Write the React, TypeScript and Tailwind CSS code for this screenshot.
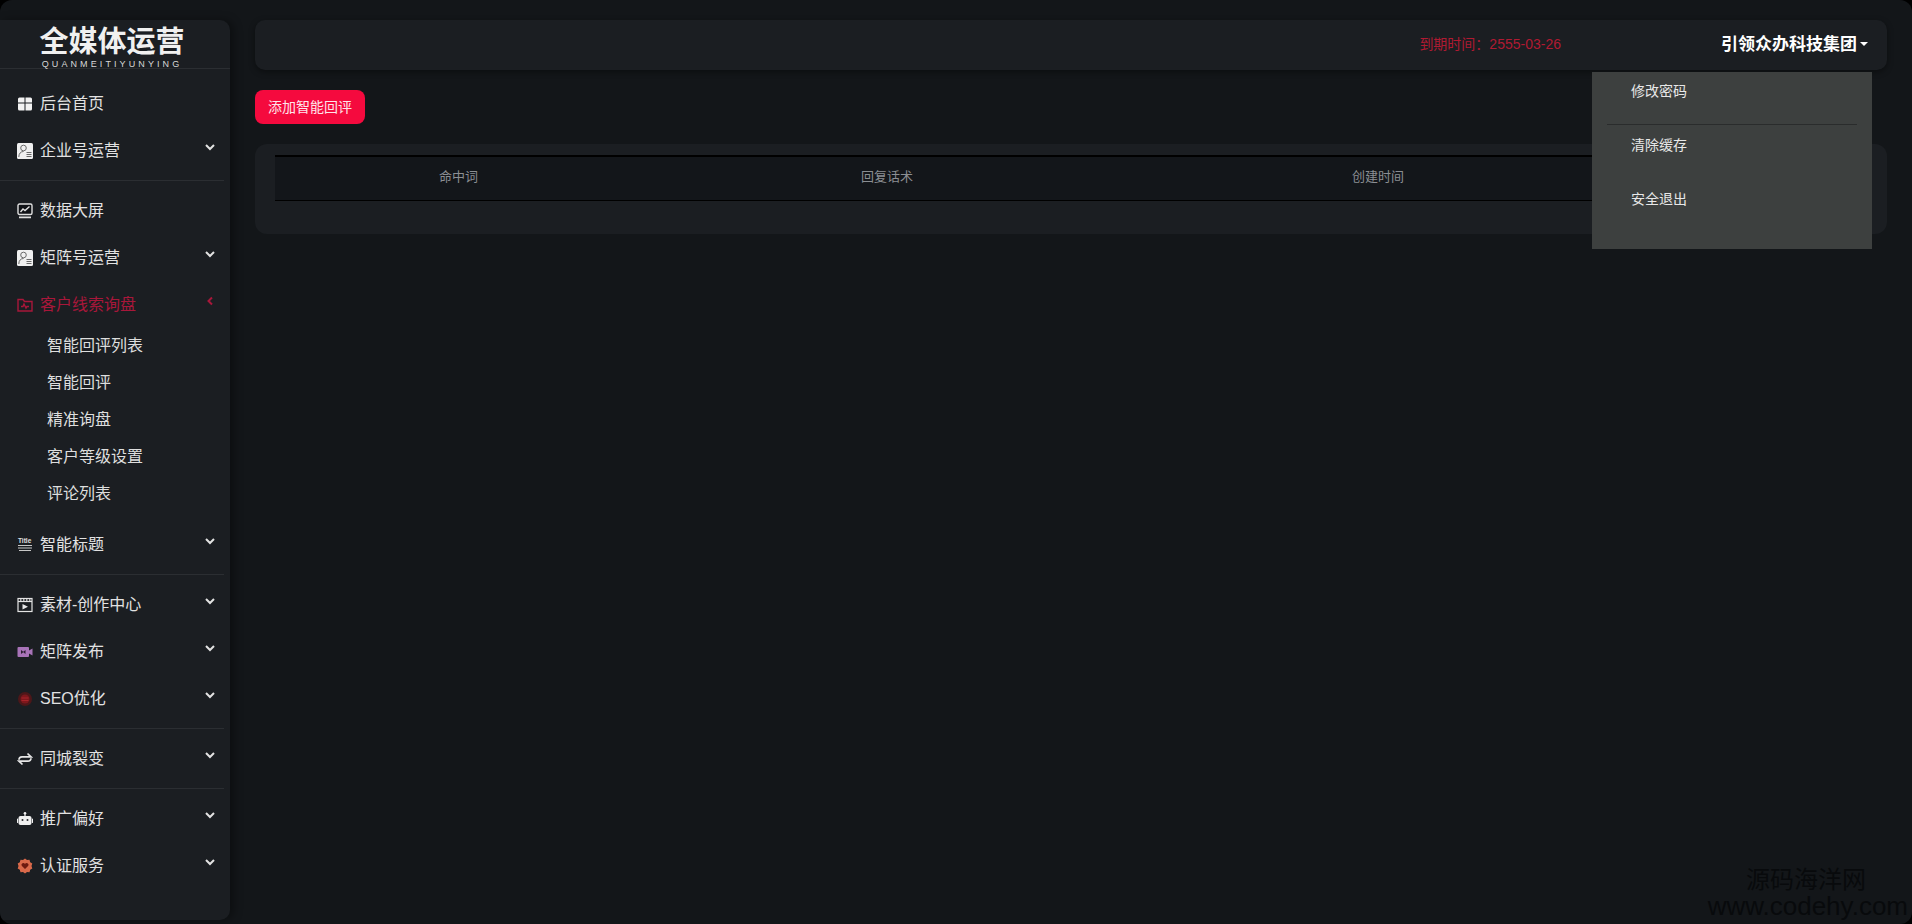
import type { ReactNode } from "react";

const Chevron = ({ open }: { open?: boolean }) => (
  <svg viewBox="0 0 12 12" className="absolute right-[14px] top-[14px] w-[12px] h-[12px]" fill="none" stroke="currentColor" strokeWidth="2">
    {open ? <path d="M8 2.500 4.500 6 8 9.500" /> : <path d="M2 4 6 8 10 4" />}
  </svg>
);

const Grid = () => (
  <svg viewBox="0 0 16 16" className="w-[16px] h-[16px]" fill="#f2f2f2">
    <path d="M2.500 1.500h5v5H1v-3.500a1.500 1.500 0 0 1 1.500-1.500ZM8.500 1.500h5a1.500 1.500 0 0 1 1.500 1.500v3.500H8.500ZM1 7.500h6.500v7h-5A1.500 1.500 0 0 1 1 13ZM8.500 7.500H15V13a1.500 1.500 0 0 1-1.500 1.500h-5Z" />
  </svg>
);

const Profile = () => (
  <svg viewBox="0 0 16 16" className="w-[16px] h-[16px]">
    <rect x="0" y="0" width="16" height="16" rx="1.500" fill="#f0f0f0" />
    <circle cx="6.500" cy="5" r="2.800" fill="none" stroke="#6a6a6a" strokeWidth="1" />
    <path d="M1.800 14c0-3.500 2-5.500 4.700-5.500M9.500 9.500h5M9.500 11.500h5M9.500 13.500h5" fill="none" stroke="#6a6a6a" strokeWidth="1" />
  </svg>
);

const Monitor = () => (
  <svg viewBox="0 0 16 16" className="w-[16px] h-[16px]" fill="none" stroke="#e0e0e0" strokeWidth="1.400">
    <rect x="1" y="1" width="14" height="10.500" rx="1.500" fill="#101216" />
    <path d="M3.500 9 6 6l2 1.500L12.500 3.500" />
    <path d="M2 14.300h12" strokeWidth="1.800" />
  </svg>
);

const FolderPulse = () => (
  <svg viewBox="0 0 16 16" className="w-[16px] h-[16px]" fill="none" stroke="#a8173a" strokeWidth="1.400">
    <path d="M1 2.500h5L7.500 4.500H15V14H1Z" />
    <path d="M4 9.500h2L7 7l2 4 1-1.500h2" />
  </svg>
);

const TitleIcon = () => (
  <svg viewBox="0 0 16 16" className="w-[16px] h-[16px]" fill="none" stroke="#c8c8c8" strokeWidth="1.100">
    <text x="1" y="6" fontSize="6.500" fontWeight="700" fill="#e0e0e0" stroke="none" fontFamily="Liberation Sans">Title</text>
    <path d="M1 8.500h14M1 11h14M2 13.500h12" />
  </svg>
);

const Clapper = () => (
  <svg viewBox="0 0 16 16" className="w-[16px] h-[16px]" fill="none" stroke="#e4e4e4" strokeWidth="1.200">
    <rect x="1" y="1.500" width="14" height="13" />
    <path d="M1 4.500h14" />
    <path d="M3 3h1.500M6 3h1.500M9 3h1.500M12 3h1.500" strokeWidth="1.600" />
    <path d="M5.500 7v5.500l5.500-2.750Z" fill="#e8e8e8" stroke="none" />
  </svg>
);

const VideoIcon = () => (
  <svg viewBox="0 0 16 16" className="w-[16px] h-[16px]">
    <rect x="0.500" y="3" width="11.500" height="10" rx="1" fill="#a873b8" />
    <path d="M12 6.500 15.500 4.500v7L12 9.500Z" fill="#a873b8" />
    <path d="M4 6v4l2.500-2ZM8.500 6v4L6 8Z" fill="#2a1e30" />
  </svg>
);

const Seo = () => (
  <svg viewBox="0 0 16 16" className="w-[16px] h-[16px]">
    <circle cx="8" cy="8" r="7" fill="#4d1719" />
    <circle cx="8" cy="8" r="4.500" fill="#7e171c" />
    <path d="M4.500 7h7M4.500 9.500h7" stroke="#a8242a" strokeWidth="1" />
  </svg>
);

const Exchange = () => (
  <svg viewBox="0 0 16 16" className="w-[16px] h-[16px]" fill="none" stroke="#e6e6e6" strokeWidth="1.700">
    <path d="M10.500 2.500 14 5.800H5a3 3 0 0 0-3 3" />
    <path d="M5.500 13.500 2 10.200h9a3 3 0 0 0 3-3" />
  </svg>
);

const Robot = () => (
  <svg viewBox="0 0 16 16" className="w-[16px] h-[16px]" fill="#f0f0f0">
    <circle cx="8" cy="2.300" r="1.300" />
    <rect x="7.400" y="3" width="1.200" height="2.500" />
    <rect x="1.500" y="5" width="13" height="9" rx="2" />
    <rect x="0" y="7.500" width="1" height="4.500" rx=".5" />
    <rect x="15" y="7.500" width="1" height="4.500" rx=".5" />
    <circle cx="5.500" cy="9" r="1" fill="#2a2c30" />
    <circle cx="10.500" cy="9" r="1" fill="#2a2c30" />
  </svg>
);

const Badge = () => (
  <svg viewBox="0 0 16 16" className="w-[16px] h-[16px]">
    <path d="M8 .5 10 2l2.500-.2.700 2.400 2.100 1.400-.8 2.400.8 2.400-2.100 1.400-.7 2.400L10 14 8 15.500 6 14l-2.500.2-.7-2.400L.7 10.400l.8-2.400-.8-2.400 2.100-1.400.7-2.400L6 2Z" fill="#d9694a" />
    <path d="M8 11 4.700 7.700a1.800 1.800 0 0 1 3.300-1.700 1.800 1.800 0 0 1 3.300 1.700Z" fill="#6d1a10" />
  </svg>
);

const Row = ({ icon, label, arrow = true, active }: { icon: ReactNode; label: string; arrow?: boolean; active?: boolean }) => (
  <div className={`relative flex items-center h-[47px] pl-[17px] gap-[7px] text-[16px] ${active ? "text-[#a8173a]" : "text-[#e2e2e2]"}`}>
    <span className="flex w-[16px] justify-center">{icon}</span>
    <span>{label}</span>
    {arrow && <Chevron open={active} />}
  </div>
);

const Divider = () => <div className="h-px w-[224px] my-[6px] bg-[#2b2e32]" />;

const subItems = ["智能回评列表", "智能回评", "精准询盘", "客户等级设置", "评论列表"];

export default function App() {
  return (
    <div className="h-screen bg-black overflow-hidden">
      <div
        className="relative h-full rounded-[12px] overflow-hidden bg-[#131619] flex gap-[25px] py-[20px] pr-[25px]"
        style={{ fontFamily: '"Liberation Sans", "Noto Sans CJK SC", sans-serif' }}
      >
        {/* Sidebar */}
        <aside className="w-[230px] h-[900px] shrink-0 rounded-r-[10px] bg-[#1b1e22] shadow-[4px_0_8px_rgba(0,0,0,0.35)]">
          <div className="h-[49px] border-b border-[#2b2e32] flex flex-col items-center pr-[6px]">
            <div className="text-[29px] font-bold leading-[30px] mt-[7px] text-[#f0f0f0]">全媒体运营</div>
            <div className="text-[9px] leading-[10px] mt-[2px] tracking-[3.1px] text-[#d8d8d8]">QUANMEITIYUNYING</div>
          </div>
          <div className="pt-[11px]">
            <Row icon={<Grid />} label="后台首页" arrow={false} />
            <Row icon={<Profile />} label="企业号运营" />
            <Divider />
            <Row icon={<Monitor />} label="数据大屏" arrow={false} />
            <Row icon={<Profile />} label="矩阵号运营" />
            <Row icon={<FolderPulse />} label="客户线索询盘" active />
            <div className="pb-[8px]">
              {subItems.map((s) => (
                <div key={s} className="h-[37px] flex items-center pl-[47px] text-[16px] text-[#dedede]">
                  <span className="-mt-[1px]">{s}</span>
                </div>
              ))}
            </div>
            <Row icon={<TitleIcon />} label="智能标题" />
            <Divider />
            <Row icon={<Clapper />} label="素材-创作中心" />
            <Row icon={<VideoIcon />} label="矩阵发布" />
            <Row icon={<Seo />} label="SEO优化" />
            <Divider />
            <Row icon={<Exchange />} label="同城裂变" />
            <Divider />
            <Row icon={<Robot />} label="推广偏好" />
            <Row icon={<Badge />} label="认证服务" />
          </div>
        </aside>

        {/* Main */}
        <main className="flex-1 min-w-0 flex flex-col items-start">
          <header className="w-full h-[50px] rounded-[10px] bg-[#1b1e22] shadow-[0_2px_6px_rgba(0,0,0,0.4)] flex items-center justify-end pr-[19px]">
            <span className="text-[14px] text-[#b01a32] mr-[160px] -mt-[1px]">到期时间：2555-03-26</span>
            <span className="text-[17px] font-bold text-white">引领众办科技集团</span>
            <span className="ml-[3px] mb-[2px] border-x-[4px] border-t-[4px] border-x-transparent border-t-white" />
          </header>
          <button className="mt-[20px] h-[34px] w-[110px] rounded-[8px] bg-[#f50a3e] text-[14px] text-[#ffe4ea]">添加智能回评</button>
          <section className="mt-[20px] w-full h-[90px] rounded-[12px] bg-[#1b1e22] px-[20px] pt-[11px]">
            <div className="grid grid-cols-[367px_490px_492px_1fr] h-[46px] items-center border-t-2 border-b border-black bg-[#13161a] text-[13px] text-[#8b8e93] text-center pb-[3px]">
              <div>命中词</div>
              <div>回复话术</div>
              <div>创建时间</div>
              <div>操作</div>
            </div>
          </section>
        </main>

        {/* Open dropdown */}
        <div className="absolute left-[1592px] top-[72px] w-[280px] h-[177px] bg-[#3d403f] text-[14px] text-[#e8e8e8] px-[15px]">
          <div className="h-[53px] pt-[9px] pl-[24px] leading-[20px] border-b border-[#2a2c2c]">修改密码</div>
          <div className="h-[54px] pt-[10px] pl-[24px] leading-[20px]">清除缓存</div>
          <div className="h-[54px] pt-[10px] pl-[24px] leading-[20px]">安全退出</div>
        </div>

        {/* Watermark */}
        <div className="absolute right-[4px] bottom-[5px] flex flex-col items-end gap-[1px] text-[#080a0c] leading-none">
          <div className="text-[24px] mr-[42px]">源码海洋网</div>
          <div className="text-[26px]">www.codehy.com</div>
        </div>
      </div>
    </div>
  );
}
